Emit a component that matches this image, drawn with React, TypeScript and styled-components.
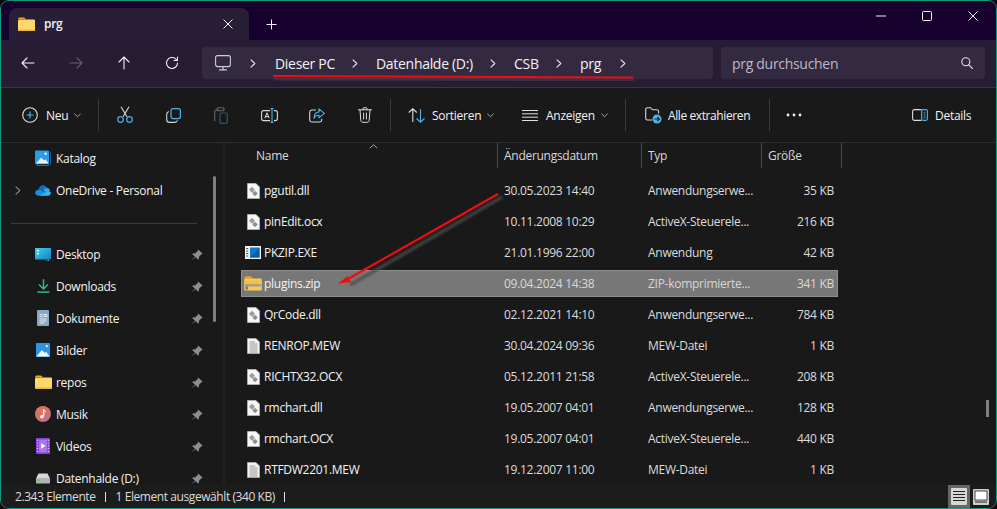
import React from 'react';
import styled, { createGlobalStyle } from 'styled-components';

const Global = createGlobalStyle`
  html, body { margin: 0; padding: 0; background: #0c0c0c; }
  * { box-sizing: border-box; }
`;

const FONT = `"Open Sans", "Noto Sans", "Liberation Sans", sans-serif`;

const Frame = styled.div`
  position: relative;
  width: 997px;
  height: 509px;
  overflow: hidden;
  display: flex;
  flex-direction: column;
  border: 1px solid #0a9c7c;
  border-radius: 9px;
  background: #191919;
  font-family: ${FONT};
  font-size: 12px;
  letter-spacing: -0.28px;
  color: #f2f2f2;
`;

const TitleBar = styled.div`
  height: 39px;
  flex: none;
  display: flex;
  align-items: flex-end;
  background: #15002e;
  padding-left: 8px;
`;

const Tab = styled.div`
  width: 240px;
  height: 32px;
  background: #291e37;
  border-radius: 8px 8px 0 0;
  display: flex;
  align-items: center;
  padding: 0 16px 0 9px;
  font-weight: 600;
  font-size: 12px;
`;

const TabLabel = styled.span`
  flex: 1;
  margin-left: 9px;
  margin-top: -1px;
`;

const PlusBtn = styled.div`
  width: 44px;
  height: 32px;
  display: flex;
  align-items: center;
  justify-content: center;
`;

const WinControls = styled.div`
  margin-left: auto;
  align-self: flex-start;
  display: flex;
  height: 30px;
`;

const WinBtn = styled.div`
  width: 46px;
  display: flex;
  align-items: center;
  justify-content: center;
`;

const NavBar = styled.div`
  height: 48px;
  flex: none;
  background: #261c33;
  border-bottom: 1px solid #3a3540;
  display: flex;
  align-items: center;
  padding-left: 3px;
  padding-bottom: 1px;
`;

const NavBtn = styled.div<{ $dim?: boolean }>`
  width: 48px;
  height: 32px;
  display: flex;
  align-items: center;
  justify-content: center;
  opacity: ${p => (p.$dim ? 0.3 : 1)};
`;

const AddressBox = styled.div`
  width: 511px;
  height: 32px;
  margin-left: 6px;
  background: #332a42;
  border-radius: 4px;
  display: flex;
  align-items: center;
  font-size: 14px;
  letter-spacing: -0.3px;
`;

const PcSlot = styled.div`
  width: 42px;
  display: flex;
  justify-content: center;
`;

const Crumb = styled.span<{ $w: number; $ml: number }>`
  width: ${p => p.$w}px;
  margin-left: ${p => p.$ml}px;
  flex: none;
  white-space: nowrap;
`;

const CrumbArrow = styled.div<{ $w: number }>`
  width: ${p => p.$w}px;
  flex: none;
  display: flex;
  justify-content: center;
`;

const SearchBox = styled.div`
  width: 264px;
  height: 32px;
  margin-left: 8px;
  background: #332a42;
  border-radius: 4px;
  display: flex;
  align-items: center;
  justify-content: space-between;
  padding: 0 12px 0 11px;
  font-size: 14px;
  letter-spacing: -0.3px;
  color: #bdb9c4;
`;

const ToolBar = styled.div`
  height: 55px;
  flex: none;
  background: #191919;
  border-bottom: 1px solid #2d2d2d;
  display: flex;
  align-items: center;
`;

const ToolIcon = styled.div<{ $dim?: boolean }>`
  width: 48px;
  height: 32px;
  flex: none;
  display: flex;
  align-items: center;
  justify-content: center;
  opacity: ${p => (p.$dim ? 0.4 : 1)};
`;

const ToolText = styled.div<{ $w: number; $ml?: number }>`
  width: ${p => p.$w}px;
  margin-left: ${p => p.$ml ?? 0}px;
  flex: none;
  height: 32px;
  display: flex;
  align-items: center;
  gap: 6px;
  white-space: nowrap;
`;

const ToolLabel = styled.span<{ $ml?: number }>`
  margin-left: ${p => p.$ml ?? 0}px;
`;

const ExtractLabel = styled.span`
  letter-spacing: -0.4px;
`;

const ToolSep = styled.div<{ $ml?: number; $mr?: number }>`
  width: 1px;
  height: 32px;
  flex: none;
  background: #3a3a3a;
  margin-left: ${p => p.$ml ?? 0}px;
  margin-right: ${p => p.$mr ?? 0}px;
`;

const Main = styled.div`
  flex: 1;
  min-height: 0;
  display: flex;
  overflow: hidden;
`;

const Sidebar = styled.div`
  width: 224px;
  flex: none;
  position: relative;
  border-right: 2px solid #222222;
  overflow: hidden;
`;

const SideList = styled.div`
  margin-top: -1px;
`;

const SideRow = styled.div`
  height: 32px;
  display: flex;
  align-items: center;
  position: relative;
  padding-left: 33px;
`;

const SideExpand = styled.div`
  position: absolute;
  left: 14px;
  top: 12px;
  display: flex;
`;

const SideIcon = styled.div`
  width: 18px;
  height: 18px;
  flex: none;
  display: flex;
  align-items: center;
  justify-content: center;
`;

const SideLabel = styled.span`
  margin-left: 4px;
  flex: 1;
  line-height: 12px;
  position: relative;
  top: 1px;
`;

const PinSlot = styled.div`
  width: 14px;
  margin-right: 17px;
  display: flex;
`;

const SideDivider = styled.div`
  height: 1px;
  margin: 17px 26px 14px 10px;
  background: #3a3a3a;
`;

const SideScroll = styled.div`
  position: absolute;
  left: 212px;
  top: 33px;
  width: 3px;
  height: 146px;
  border-radius: 2px;
  background: #808080;
`;

const FilesPane = styled.div`
  flex: 1;
  position: relative;
  padding-left: 16px;
  overflow: hidden;
`;

const HeaderRow = styled.div`
  display: grid;
  grid-template-columns: 257px 144px 120px 80px;
  height: 25px;
  color: #d8d8d8;
  position: relative;
`;

const HeaderCell = styled.div<{ $pl: number }>`
  border-right: 1px solid #4a4a4a;
  padding-left: ${p => p.$pl}px;
  display: flex;
  align-items: center;
`;

const SortMark = styled.div`
  position: absolute;
  left: 128px;
  top: 1px;
  display: flex;
`;

const FileList = styled.div`
  margin-top: 9px;
`;

const FileRow = styled.div<{ $sel?: boolean }>`
  display: grid;
  grid-template-columns: 263px 144px 120px 70px;
  width: 597px;
  height: 27px;
  margin-bottom: 4px;
  align-items: center;
  background: ${p => (p.$sel ? '#777777' : 'transparent')};
  outline: ${p => (p.$sel ? '1px solid #8f8f8f' : 'none')};
  outline-offset: -1px;
`;

const FileName = styled.div`
  display: flex;
  align-items: center;
  padding-left: 2px;
  color: #f4f4f4;
`;

const FileIconSlot = styled.div`
  width: 20px;
  height: 20px;
  flex: none;
  margin-right: 1px;
  display: flex;
  align-items: center;
  justify-content: center;
`;

const FileCell = styled.div<{ $sel?: boolean; $right?: boolean }>`
  color: ${p => (p.$sel ? '#d8d8d8' : '#dcdcdc')};
  text-align: ${p => (p.$right ? 'right' : 'left')};
  padding-right: ${p => (p.$right ? 4 : 0)}px;
  white-space: nowrap;
`;

const FileScroll = styled.div`
  position: absolute;
  left: 761px;
  top: 257px;
  width: 3px;
  height: 17px;
  background: #808080;
`;

const StatusBar = styled.div`
  height: 23px;
  flex: none;
  display: flex;
  align-items: center;
  background: #1c1c1c;
  padding-left: 14px;
  color: #dcdcdc;
  letter-spacing: -0.42px;
`;

const StatusItem = styled.span`
  display: inline-block;
  padding-right: 10px;
  margin-right: 10px;
  line-height: 14px;
  position: relative;
  &::after {
    content: '';
    position: absolute;
    right: 0;
    top: 2px;
    height: 10px;
    width: 1px;
    background: #e0e0e0;
  }
`;

const ViewSwitch = styled.div`
  margin-left: auto;
  display: flex;
  align-items: center;
  height: 100%;
  padding-right: 4px;
`;

const ViewBtn = styled.div<{ $on?: boolean }>`
  width: 22px;
  height: 23px;
  display: flex;
  align-items: center;
  justify-content: center;
  background: ${p => (p.$on ? '#666666' : 'transparent')};
`;

const Annotation = styled.svg`
  position: absolute;
  left: -1px;
  top: -1px;
  pointer-events: none;
`;

/* ---------- icons ---------- */
const S = { fill: 'none', stroke: 'currentColor', strokeLinecap: 'round', strokeLinejoin: 'round' } as const;
const BLUE = '#4cb2ec';

const FolderIcon = () => (
  <svg width="17" height="15" viewBox="0 0 17 15">
    <path d="M0 2.200C0 1 .8.500 1.600.500h3.900c.6 0 1 .2 1.400.6L8 2.300H0z" fill="#e8a91e" />
    <rect x="0" y="2.600" width="17" height="11.500" rx="1.300" fill="#fdd96d" />
    <path d="M0 12.600h17v.3c0 .7-.5 1.200-1.300 1.200H1.300C.5 14.100 0 13.600 0 12.900z" fill="#eab53c" />
  </svg>
);
const Close = () => (
  <svg width="10" height="10" viewBox="0 0 10 10" color="#f0f0f0"><path d="M.5.500l9 9M9.500.500l-9 9" {...S} strokeLinecap="butt" /></svg>
);
const Plus = () => (
  <svg width="11" height="11" viewBox="0 0 11 11" color="#f0f0f0"><path d="M5.500.5v10M.5 5.500h10" {...S} strokeLinecap="butt" /></svg>
);
const Arrow = ({ d }: { d: string }) => (
  <svg width="16" height="16" viewBox="0 0 16 16" color="#f4f0f8"><path d={d} {...S} strokeWidth="1.100" /></svg>
);
const Refresh = () => (
  <svg width="14" height="14" viewBox="0 0 14 14" color="#f4f0f8">
    <path d="M12.500 7A5.500 5.500 0 1 1 10.600 2.800L12.500 4.500M12.500 1v3.500H9" {...S} strokeWidth="1.100" />
  </svg>
);
const Monitor = () => (
  <svg width="16" height="16" viewBox="0 0 16 16" color="#cfcdd3">
    <rect x=".6" y=".6" width="14.800" height="11" rx="2" {...S} strokeWidth="1.100" />
    <path d="M8 11.600v3M4.500 14.800h7" {...S} strokeWidth="1.200" />
  </svg>
);
const Chevron = ({ c = '#e8e6ec' }: { c?: string }) => (
  <svg width="6" height="9" viewBox="0 0 6 9" color={c}><path d="M1 .8l3.800 3.700L1 8.200" {...S} strokeWidth="1.100" /></svg>
);
const Down = () => (
  <svg width="7" height="5" viewBox="0 0 7 5" color="#a8a8a8"><path d="M.7 1l2.800 2.700L6.300 1" {...S} strokeWidth="1" /></svg>
);
const SearchIcon = () => (
  <svg width="12" height="12" viewBox="0 0 12 12" color="#e4e2e8"><circle cx="4.800" cy="4.800" r="4" {...S} strokeWidth="1.100" /><path d="M7.800 7.800l3.600 3.600" {...S} strokeWidth="1.200" /></svg>
);
const NewIcon = () => (
  <svg width="16" height="16" viewBox="0 0 16 16"><circle cx="8" cy="8" r="7.300" fill="none" stroke="#e0e0e0" strokeWidth="1.100" /><path d="M8 4.500v7M4.500 8h7" stroke={BLUE} strokeWidth="1.200" /></svg>
);
const Cut = () => (
  <svg width="16" height="18" viewBox="0 0 16 18">
    <path d="M4 .8l6 10M12 .8l-6 10" stroke="#d8d8d8" fill="none" strokeWidth="1.100" />
    <circle cx="3.500" cy="13.500" r="2.800" fill="none" stroke={BLUE} strokeWidth="1.200" />
    <circle cx="12.500" cy="13.500" r="2.800" fill="none" stroke={BLUE} strokeWidth="1.200" />
  </svg>
);
const Copy = () => (
  <svg width="15" height="15" viewBox="0 0 15 15">
    <rect x="5" y=".6" width="9.400" height="10" rx="2" fill="none" stroke={BLUE} strokeWidth="1.200" />
    <path d="M2.800 3.500C1.500 4 .7 5 .7 6.200v5.200c0 1.700 1.300 3 3 3h5.200c1.200 0 2.200-.8 2.600-2" fill="none" stroke="#d8d8d8" strokeWidth="1.100" />
  </svg>
);
const Paste = () => (
  <svg width="14" height="17" viewBox="0 0 14 17">
    <path d="M5 3H2.500A1.800 1.800 0 0 0 .7 4.800v9.400" fill="none" stroke="#d8d8d8" strokeWidth="1.100" />
    <rect x="3" y=".7" width="7" height="3" rx="1" fill="none" stroke="#d8d8d8" strokeWidth="1.100" />
    <rect x="6" y="6" width="7.300" height="10.300" rx="1.200" fill="none" stroke={BLUE} strokeWidth="1.200" />
  </svg>
);
const Rename = () => (
  <svg width="17" height="15" viewBox="0 0 17 15">
    <rect x=".6" y="2.600" width="15.800" height="10" rx="2" fill="none" stroke="#d8d8d8" strokeWidth="1.100" />
    <rect x="9" y="1" width="4" height="13" fill="#191919" />
    <path d="M3.800 10.300L6 4.800l2.200 5.500M4.500 8.600h3" fill="none" stroke="#e0e0e0" strokeWidth="1" />
    <path d="M9.500.6h3M11 .6v13.800M9.500 14.400h3" fill="none" stroke={BLUE} strokeWidth="1.100" />
  </svg>
);
const Share = () => (
  <svg width="16" height="15" viewBox="0 0 16 15">
    <path d="M7 2H3a2.300 2.300 0 0 0-2.300 2.300v7.400A2.300 2.300 0 0 0 3 14h7.400a2.300 2.300 0 0 0 2.300-2.300v-1" fill="none" stroke="#d8d8d8" strokeWidth="1.100" />
    <path d="M10 .8l5.300 4.500L10 9.800V7.300C7.500 7.300 5.800 8.500 5 10.500c0-4 2-6.300 5-6.600z" fill="none" stroke={BLUE} strokeWidth="1.100" strokeLinejoin="round" />
  </svg>
);
const Trash = () => (
  <svg width="14" height="16" viewBox="0 0 14 16" color="#dcdcdc">
    <path d="M.5 2.800h13M5 2.800V1.800c0-.7.400-1.100 1-1.100h2c.6 0 1 .4 1 1.100v1M2 2.800l.8 10.600c.1 1.100.9 1.900 2 1.900h4.400c1.100 0 1.900-.8 2-1.900L12 2.800M5.600 6v6M8.400 6v6" {...S} strokeWidth="1" />
  </svg>
);
const Sort = () => (
  <svg width="17" height="15" viewBox="0 0 17 15">
    <path d="M.8 4.500L4.800.8l4 3.700M4.800 1v13" fill="none" stroke="#e0e0e0" strokeWidth="1.100" />
    <path d="M8.500 10.500l4 3.700 4-3.700M12.500 14V1" fill="none" stroke={BLUE} strokeWidth="1.100" />
  </svg>
);
const Lines = () => (
  <svg width="16" height="11" viewBox="0 0 16 11"><path d="M0 .5h16M0 3.800h16M0 7.200h16M0 10.500h16" stroke="#e0e0e0" strokeWidth="1" /></svg>
);
const Extract = () => (
  <svg width="17" height="17" viewBox="0 0 17 17">
    <path d="M7 13H2.500A1.800 1.800 0 0 1 .7 11.200V2.500A1.800 1.800 0 0 1 2.500.7h3l2 2.100h4.300c1 0 1.800.8 1.800 1.800v2" fill="none" stroke="#d8d8d8" strokeWidth="1.100" />
    <circle cx="12" cy="12" r="4.500" fill={BLUE} />
    <path d="M9.500 12h4.500M12.400 10l2 2-2 2" fill="none" stroke="#10202c" strokeWidth="1.100" />
  </svg>
);
const Dots = () => (
  <svg width="16" height="4" viewBox="0 0 16 4"><circle cx="2" cy="2" r="1.400" fill="#eee" /><circle cx="8" cy="2" r="1.400" fill="#eee" /><circle cx="14" cy="2" r="1.400" fill="#eee" /></svg>
);
const DetailsIcon = () => (
  <svg width="16" height="12" viewBox="0 0 16 12">
    <path d="M9.500.6H2.300A1.800 1.800 0 0 0 .6 2.400v7.200c0 1 .8 1.800 1.700 1.800h7.200" fill="none" stroke="#dcdcdc" strokeWidth="1.100" />
    <rect x="9.600" y=".6" width="5.800" height="10.800" rx="1.600" fill="none" stroke={BLUE} strokeWidth="1.100" />
    <path d="M11.500 3.300h2M11.500 5.200h2M11.500 7h2M11.500 8.800h2" stroke={BLUE} strokeWidth=".8" />
  </svg>
);

const Pin = () => (
  <svg width="11" height="11" viewBox="0 0 11 11">
    <path d="M6.300.4l4.300 4.300-1.500.7-2.200 2.500.2 1.800-1 .9L3.400 8 .8 10.600.4 10.200 3 7.600.3 5.300l.9-1 1.800.2 2.500-2.200z" fill="#8b8f94" />
  </svg>
);

const Katalog = () => (
  <svg width="16" height="16" viewBox="0 0 16 16">
    <path d="M2 3v12.400h12.500" fill="none" stroke="#1c6fb8" strokeWidth="1.300" />
    <path d="M15.600 1.500V15" stroke="#1c6fb8" strokeWidth=".8" />
    <rect x="0" y=".6" width="14" height="13.400" rx="1" fill="#2f9ae6" />
    <path d="M1 13.400l5.200-6 3 3 1.400-1.200 3 4.200z" fill="#e8f4fc" />
    <circle cx="10.600" cy="3.800" r="1.200" fill="#e8f4fc" />
  </svg>
);
const OneDrive = () => (
  <svg width="16" height="11" viewBox="0 0 16 11">
    <path d="M3.300 4.800C4 2 6 .3 8 .3c2 0 3.300 1.100 4.200 2.700-2 .1-3.500 1-4.200 2.400-1.700-.8-3.200-.8-4.700-.6z" fill="#0f6cc4" />
    <path d="M3.800 10.800C1.600 10.800.2 9.500.2 7.700c0-1.800 1.500-3 3.400-3 1.400 0 3 .5 4.400 1.200l3 1.700L8.200 10.800z" fill="#1690dc" />
    <path d="M8 5.400C9 3.700 10.600 2.900 12.500 3c1.900.3 2.700 2 2.400 3.400L12 8z" fill="#2aa8e8" />
    <path d="M5 10.800l7.200-4.400 3.600.8c.1 2-1 3.600-2.800 3.600z" fill="#38b8f0" />
  </svg>
);
const DesktopIcon = () => (
  <svg width="16" height="13" viewBox="0 0 16 13">
    <defs><linearGradient id="dk" x1="0" y1="0" x2="1" y2="1"><stop offset="0" stopColor="#45d0ee" /><stop offset="1" stopColor="#0e80c6" /></linearGradient></defs>
    <rect width="16" height="11.500" rx=".8" fill="url(#dk)" />
    <rect x="2" y="2" width="2" height="1.500" fill="#e8f8ff" />
    <rect x="2" y="5" width="2" height="1.500" fill="#e8f8ff" />
    <path d="M11.500 12.500h.8M13 12.500h.8" stroke="#9fd8ee" />
  </svg>
);
const DownloadIcon = () => (
  <svg width="13" height="14" viewBox="0 0 13 14">
    <path d="M6.500.2v9.300M2 5.500l4.500 4.500L11 5.500" fill="none" stroke="#2dbd92" strokeWidth="1.500" />
    <path d="M.5 13.100h12" stroke="#2dbd92" strokeWidth="1.500" />
  </svg>
);
const DocIcon = () => (
  <svg width="12" height="16" viewBox="0 0 12 16">
    <rect width="12" height="16" rx="1" fill="#8aa6c8" />
    <path d="M2.500 4.500h3M2.500 6.500h3M7 4.500h2.800v2H7zM2.500 9h7M2.500 11h7M2.500 13h5" stroke="#eef3f8" strokeWidth=".9" fill="none" />
  </svg>
);
const BilderIcon = () => (
  <svg width="14" height="14" viewBox="0 0 14 14">
    <rect width="14" height="14" rx=".8" fill="#2b95e2" />
    <path d="M.4 13.500l5.400-6.500 3 3 1.300-1.200 3.500 4.700z" fill="#f0f8fe" />
    <circle cx="10.800" cy="3.200" r="1.100" fill="#f0f8fe" />
  </svg>
);
const MusicIcon = () => (
  <svg width="16" height="16" viewBox="0 0 16 16">
    <defs><linearGradient id="mu" x1="0" y1="0" x2="1" y2="1"><stop offset="0" stopColor="#e8794c" /><stop offset="1" stopColor="#b86a90" /></linearGradient></defs>
    <circle cx="8" cy="8" r="8" fill="url(#mu)" />
    <path d="M8.700 3.500v7" stroke="#fff" strokeWidth="1.200" />
    <path d="M8.700 3.500c.3 1.500 1.500 1.700 2.300 2.200" stroke="#fff" strokeWidth="1" fill="none" />
    <circle cx="6.900" cy="10.700" r="1.800" fill="#fff" />
  </svg>
);
const VideoIcon = () => (
  <svg width="14" height="16" viewBox="0 0 14 16">
    <rect width="14" height="16" rx=".8" fill="#8a3fd8" />
    <rect x="3" y="1.500" width="8" height="13" fill="#a878e8" />
    <path d="M5.200 5.200L9.500 8l-4.300 2.800z" fill="#fff" />
    <path d="M.8 2.200h1.400M.8 5h1.400M.8 7.800h1.400M.8 10.600h1.400M.8 13.400h1.400M11.800 2.200h1.400M11.800 5h1.400M11.800 7.800h1.400M11.800 10.600h1.400M11.800 13.400h1.400" stroke="#e4d4f8" strokeWidth="1" />
  </svg>
);
const DriveIcon = () => (
  <svg width="14" height="11" viewBox="0 0 14 11">
    <path d="M2.500.5h9L14 5.500H0z" fill="#d8d8d8" />
    <rect x="0" y="5" width="14" height="5.500" rx=".8" fill="#b4b4b4" />
    <rect x="1.500" y="6.800" width="2" height="1.200" fill="#3fd05a" />
  </svg>
);

const DllIcon = () => (
  <svg width="13" height="16" viewBox="0 0 13 16">
    <path d="M.5.500h8.500l3.500 3.500v11.500H.5z" fill="#f6f6f6" stroke="#b8b8b8" strokeWidth=".8" />
    <circle cx="5" cy="6.800" r="2.200" fill="#9a9ea4" />
    <circle cx="5" cy="6.800" r=".8" fill="#f6f6f6" />
    <circle cx="8" cy="10.400" r="2" fill="#7e8288" />
    <circle cx="8" cy="10.400" r=".7" fill="#f6f6f6" />
    <path d="M5 3.900v5.800M2.100 6.800h5.800M8 7.800v5.200M5.400 10.400h5.200" stroke="#8c9096" strokeWidth=".8" />
  </svg>
);
const ExeIcon = () => (
  <svg width="16" height="13" viewBox="0 0 16 13">
    <rect width="16" height="13" fill="#f2f2f2" />
    <rect x="5" y="1.500" width="9.500" height="10" fill="#0f78d0" />
    <path d="M5 11.500L14.500 1.500v10z" fill="#0a5ea8" />
    <path d="M1.200 2.500h2M1.200 5h2M1.200 7.500h2M1.200 10h2" stroke="#444" strokeWidth="1.200" />
  </svg>
);
const ZipIcon = () => (
  <svg width="18" height="15" viewBox="0 0 18 15">
    <path d="M.2 2.200C.2 1 .9.300 1.800.300h4.400c.6 0 1 .2 1.400.6L9 2.500H.2z" fill="#e3a519" />
    <rect x=".2" y="2.600" width="17.600" height="11.800" rx="1.200" fill="#fcc94e" />
    <path d="M.2 5.400h17.600" stroke="#eeb030" strokeWidth=".8" />
    <rect x=".2" y="7.300" width="17.600" height="3.800" fill="#d9c79a" />
    <path d="M.5 9.200h17M2 7.500v3.400M4 7.500v3.400M6 7.500v3.400M8 7.500v3.400M10 7.500v3.400M12 7.500v3.400M14 7.500v3.400M16 7.500v3.400" stroke="#8a7a50" strokeWidth=".6" />
    <rect x="1.600" y="10.500" width="2.500" height="3" fill="#777" />
  </svg>
);
const TextDoc = () => (
  <svg width="13" height="16" viewBox="0 0 13 16">
    <path d="M.5.500h8.500l3.500 3.500v11.500H.5z" fill="#f2f2f2" stroke="#b0b0b0" strokeWidth=".8" />
    <path d="M2.500 4h5.500M2.500 6h8M2.500 8h8M2.500 10h8M2.500 12h8M2.500 14h8" stroke="#8e8e8e" strokeWidth=".9" />
  </svg>
);
const ListView = () => (
  <svg width="16" height="17" viewBox="0 0 16 17">
    <rect width="16" height="17" rx="1" fill="#d6d6d6" />
    <path d="M2 3.500h12M2 6.500h12M2 9.500h12M2 12.500h12" stroke="#222" strokeWidth="1" />
  </svg>
);
const TileView = () => (
  <svg width="16" height="16" viewBox="0 0 16 16">
    <rect width="16" height="16" rx="1" fill="#cfcfcf" />
    <rect x="2" y="2" width="12" height="9" fill="#fff" stroke="#222" strokeWidth=".8" />
    <path d="M2 13h12" stroke="#222" strokeWidth="1" />
  </svg>
);

/* ---------- data ---------- */
const quick = [
  { label: 'Desktop', icon: <DesktopIcon /> },
  { label: 'Downloads', icon: <DownloadIcon /> },
  { label: 'Dokumente', icon: <DocIcon /> },
  { label: 'Bilder', icon: <BilderIcon /> },
  { label: 'repos', icon: <FolderIcon /> },
  { label: 'Musik', icon: <MusicIcon /> },
  { label: 'Videos', icon: <VideoIcon /> },
  { label: 'Datenhalde (D:)', icon: <DriveIcon /> },
];

const files = [
  { n: 'pgutil.dll', d: '30.05.2023 14:40', t: 'Anwendungserwe...', s: '35 KB', i: <DllIcon /> },
  { n: 'pinEdit.ocx', d: '10.11.2008 10:29', t: 'ActiveX-Steuerele...', s: '216 KB', i: <DllIcon /> },
  { n: 'PKZIP.EXE', d: '21.01.1996 22:00', t: 'Anwendung', s: '42 KB', i: <ExeIcon /> },
  { n: 'plugins.zip', d: '09.04.2024 14:38', t: 'ZIP-komprimierte...', s: '341 KB', i: <ZipIcon />, sel: true },
  { n: 'QrCode.dll', d: '02.12.2021 14:10', t: 'Anwendungserwe...', s: '784 KB', i: <DllIcon /> },
  { n: 'RENROP.MEW', d: '30.04.2024 09:36', t: 'MEW-Datei', s: '1 KB', i: <TextDoc /> },
  { n: 'RICHTX32.OCX', d: '05.12.2011 21:58', t: 'ActiveX-Steuerele...', s: '208 KB', i: <DllIcon /> },
  { n: 'rmchart.dll', d: '19.05.2007 04:01', t: 'Anwendungserwe...', s: '128 KB', i: <DllIcon /> },
  { n: 'rmchart.OCX', d: '19.05.2007 04:01', t: 'ActiveX-Steuerele...', s: '440 KB', i: <DllIcon /> },
  { n: 'RTFDW2201.MEW', d: '19.12.2007 11:00', t: 'MEW-Datei', s: '1 KB', i: <TextDoc /> },
];

export default function App() {
  return (
    <>
      <Global />
      <Frame>
        <TitleBar>
          <Tab>
            <FolderIcon />
            <TabLabel>prg</TabLabel>
            <Close />
          </Tab>
          <PlusBtn><Plus /></PlusBtn>
          <WinControls>
            <WinBtn><svg width="10" height="2" viewBox="0 0 10 2"><path d="M0 1h10" stroke="#f0f0f0" /></svg></WinBtn>
            <WinBtn><svg width="10" height="10" viewBox="0 0 10 10"><rect x=".5" y=".5" width="9" height="9" rx="1" fill="none" stroke="#f0f0f0" /></svg></WinBtn>
            <WinBtn><Close /></WinBtn>
          </WinControls>
        </TitleBar>

        <NavBar>
          <NavBtn><Arrow d="M14 8H2M7 3L2 8l5 5" /></NavBtn>
          <NavBtn $dim><Arrow d="M2 8h12M9 3l5 5-5 5" /></NavBtn>
          <NavBtn><Arrow d="M8 14V2M3 7l5-5 5 5" /></NavBtn>
          <NavBtn><Refresh /></NavBtn>
          <AddressBox>
            <PcSlot><Monitor /></PcSlot>
            <CrumbArrow $w={18}><Chevron /></CrumbArrow>
            <Crumb $w={70} $ml={13}>Dieser PC</Crumb>
            <CrumbArrow $w={20}><Chevron /></CrumbArrow>
            <Crumb $w={107} $ml={11}>Datenhalde (D:)</Crumb>
            <CrumbArrow $w={20}><Chevron /></CrumbArrow>
            <Crumb $w={35} $ml={11}>CSB</Crumb>
            <CrumbArrow $w={20}><Chevron /></CrumbArrow>
            <Crumb $w={33} $ml={11}>prg</Crumb>
            <CrumbArrow $w={20}><Chevron /></CrumbArrow>
          </AddressBox>
          <SearchBox>
            prg durchsuchen
            <SearchIcon />
          </SearchBox>
        </NavBar>

        <ToolBar>
          <ToolText $w={80} $ml={21}><NewIcon /><ToolLabel $ml={2}>Neu</ToolLabel><Down /></ToolText>
          <ToolSep $ml={-4} $mr={2} />
          <ToolIcon><Cut /></ToolIcon>
          <ToolIcon><Copy /></ToolIcon>
          <ToolIcon $dim><Paste /></ToolIcon>
          <ToolIcon><Rename /></ToolIcon>
          <ToolIcon><Share /></ToolIcon>
          <ToolIcon><Trash /></ToolIcon>
          <ToolSep $ml={1} />
          <ToolText $w={114} $ml={17}><Sort /><ToolLabel $ml={1}>Sortieren</ToolLabel><Down /></ToolText>
          <ToolText $w={96}><Lines /><ToolLabel $ml={2}>Anzeigen</ToolLabel><Down /></ToolText>
          <ToolSep $ml={7} />
          <ToolText $w={125} $ml={19}><Extract /><ExtractLabel>Alle extrahieren</ExtractLabel></ToolText>
          <ToolSep $ml={-1} />
          <ToolIcon><Dots /></ToolIcon>
          <ToolText $w={80} $ml={94}><DetailsIcon /><ToolLabel $ml={1}>Details</ToolLabel></ToolText>
        </ToolBar>

        <Main>
          <Sidebar>
            <SideList>
              <SideRow><SideIcon><Katalog /></SideIcon><SideLabel>Katalog</SideLabel></SideRow>
              <SideRow>
                <SideExpand><Chevron c="#8a8a8a" /></SideExpand>
                <SideIcon><OneDrive /></SideIcon><SideLabel>OneDrive - Personal</SideLabel>
              </SideRow>
              <SideDivider />
              {quick.map(q => (
                <SideRow key={q.label}>
                  <SideIcon>{q.icon}</SideIcon>
                  <SideLabel>{q.label}</SideLabel>
                  <PinSlot><Pin /></PinSlot>
                </SideRow>
              ))}
            </SideList>
            <SideScroll />
          </Sidebar>

          <FilesPane>
            <HeaderRow>
              <SortMark><svg width="9" height="5" viewBox="0 0 9 5"><path d="M.8 4.200L4.500.8l3.700 3.400" fill="none" stroke="#a8a8a8" /></svg></SortMark>
              <HeaderCell $pl={15}>Name</HeaderCell>
              <HeaderCell $pl={6}>Änderungsdatum</HeaderCell>
              <HeaderCell $pl={6}>Typ</HeaderCell>
              <HeaderCell $pl={6}>Größe</HeaderCell>
            </HeaderRow>
            <FileList>
              {files.map(f => (
                <FileRow key={f.n} $sel={f.sel}>
                  <FileName><FileIconSlot>{f.i}</FileIconSlot>{f.n}</FileName>
                  <FileCell $sel={f.sel}>{f.d}</FileCell>
                  <FileCell $sel={f.sel}>{f.t}</FileCell>
                  <FileCell $sel={f.sel} $right>{f.s}</FileCell>
                </FileRow>
              ))}
            </FileList>
            <FileScroll />
          </FilesPane>
        </Main>

        <StatusBar>
          <StatusItem>2.343 Elemente</StatusItem>
          <StatusItem>1 Element ausgewählt (340 KB)</StatusItem>
          <ViewSwitch>
            <ViewBtn $on><ListView /></ViewBtn>
            <ViewBtn><TileView /></ViewBtn>
          </ViewSwitch>
        </StatusBar>

        <Annotation width="997" height="509" viewBox="0 0 997 509">
          <defs>
            <filter id="sh" x="-10%" y="-50%" width="120%" height="250%"><feGaussianBlur stdDeviation="1" /></filter>
          </defs>
          <path d="M274 79L634 80" stroke="#555" strokeOpacity=".7" strokeWidth="2" filter="url(#sh)" fill="none" />
          <path d="M273 76L633 77.500" stroke="#f00c10" strokeWidth="2" fill="none" />
          <path d="M502 197L350 285" stroke="#4a4a4a" strokeOpacity=".8" strokeWidth="3.500" filter="url(#sh)" fill="none" />
          <path d="M498 194L348 279" stroke="#f00c10" strokeWidth="2.200" fill="none" />
          <path d="M338 283.500L348 276L351 282z" fill="#f00c10" />
        </Annotation>
      </Frame>
    </>
  );
}
